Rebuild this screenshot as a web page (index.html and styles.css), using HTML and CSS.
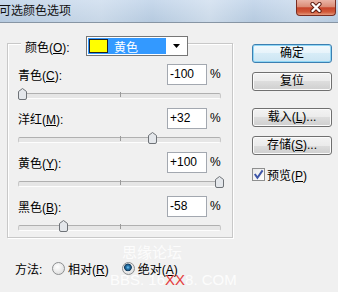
FILE: index.html
```html
<!DOCTYPE html>
<html lang="zh">
<head>
  <meta charset="UTF-8" />
  <title>可选颜色选项</title>
  <link rel="stylesheet" href="styles.css">
</head>
<body>

  <div class="titlebar">
    <span class="title">可选颜色选项</span>
    <div class="close">
      <svg width="14" height="11" viewBox="0 0 14 11">
        <path d="M3.5 2 L10.5 9 M10.5 2 L3.5 9" stroke="#5c1c12" stroke-width="4.2" stroke-linecap="round"/>
        <path d="M3.5 2 L10.5 9 M10.5 2 L3.5 9" stroke="#fff" stroke-width="2.4" stroke-linecap="round"/>
      </svg>
    </div>
  </div>

  <div class="dialog">
    <div class="left">
      <div class="group">
        <div class="legend">
          <span class="lbl">颜色(<u>O</u>):</span>
          <div class="select">
            <div class="val"><i class="swatch"></i><span>黄色</span></div>
            <div class="arrow"><svg width="7" height="4" viewBox="0 0 7 4"><path d="M0 0 H7 L3.5 4 Z" fill="#000"/></svg></div>
          </div>
        </div>

        <div class="channels">
          <div class="channel">
            <div class="head"><span class="lbl">青色(<u>C</u>):</span><span class="num">-100</span><span class="pct">%</span></div>
            <div class="slider">
              <svg class="thumb" style="left: 0px" width="9" height="12" viewBox="0 0 9 12"><path d="M0.5 3.5 L4.5 0.5 L8.5 3.5 V10 Q8.5 11.5 7 11.5 H2 Q0.5 11.5 0.5 10 Z" fill="#e4e7eb" stroke="#6e7277"/></svg>
            </div>
          </div>
          <div class="channel">
            <div class="head"><span class="lbl">洋红(<u>M</u>):</span><span class="num">+32</span><span class="pct">%</span></div>
            <div class="slider">
              <svg class="thumb" style="left: 130px" width="9" height="12" viewBox="0 0 9 12"><path d="M0.5 3.5 L4.5 0.5 L8.5 3.5 V10 Q8.5 11.5 7 11.5 H2 Q0.5 11.5 0.5 10 Z" fill="#e4e7eb" stroke="#6e7277"/></svg>
            </div>
          </div>
          <div class="channel">
            <div class="head"><span class="lbl">黄色(<u>Y</u>):</span><span class="num">+100</span><span class="pct">%</span></div>
            <div class="slider">
              <svg class="thumb" style="left: 197px" width="9" height="12" viewBox="0 0 9 12"><path d="M0.5 3.5 L4.5 0.5 L8.5 3.5 V10 Q8.5 11.5 7 11.5 H2 Q0.5 11.5 0.5 10 Z" fill="#e4e7eb" stroke="#6e7277"/></svg>
            </div>
          </div>
          <div class="channel">
            <div class="head"><span class="lbl">黑色(<u>B</u>):</span><span class="num">-58</span><span class="pct">%</span></div>
            <div class="slider">
              <svg class="thumb" style="left: 41px" width="9" height="12" viewBox="0 0 9 12"><path d="M0.5 3.5 L4.5 0.5 L8.5 3.5 V10 Q8.5 11.5 7 11.5 H2 Q0.5 11.5 0.5 10 Z" fill="#e4e7eb" stroke="#6e7277"/></svg>
            </div>
          </div>
        </div>
      </div>

      <div class="method">
        <span class="lbl">方法:</span>
        <span class="radio"></span><span class="opt">相对(<u>R</u>)</span>
        <span class="radio on"></span><span class="opt">绝对(<u>A</u>)</span>
      </div>
    </div>

    <div class="right">
      <div class="btn default">确定</div>
      <div class="btn">复位</div>
      <div class="btn gap">载入(<u>L</u>)...</div>
      <div class="btn">存储(<u>S</u>)...</div>
      <div class="check">
        <span class="box"><svg width="11" height="11" viewBox="0 0 11 11"><path d="M1.8 5 L4.4 8.8 L9.6 1.4" stroke="#3d55a8" stroke-width="2" fill="none"/></svg></span>
        <span>预览(<u>P</u>)</span>
      </div>
    </div>
  </div>

  <!-- watermark over the lower part -->
  <div class="watermark">
    <div class="wm-cn">思缘论坛</div>
    <div class="wm-url">BBS. 16<span class="red">XX</span>8. COM</div>
  </div>

</body>
</html>
```

FILE: styles.css
```css
* {
  box-sizing: border-box;
}

body {
  margin: 0;
  width: 338px;
  height: 292px;
  overflow: hidden;
  position: relative;
  background: #f0f0f0;
  font-family: "Liberation Sans", "Noto Sans CJK SC", sans-serif;
  font-size: 12px;
  color: #000;
}

u {
  text-decoration-thickness: 1px;
  text-underline-offset: 1px;
}

.titlebar {
  height: 23px;
  display: flex;
  justify-content: space-between;
  align-items: flex-start;
  overflow: hidden;
  border-bottom: 1px solid #8795a4;
  background:
    linear-gradient(90deg, rgba(255,255,255,0) 0%, rgba(255,255,255,0.25) 30%, rgba(255,255,255,0) 45%, rgba(255,255,255,0.3) 62%, rgba(255,255,255,0) 75%, rgba(255,255,255,0.2) 88%, rgba(255,255,255,0) 100%),
    linear-gradient(#c8d9ec, #b6cadf);
}

.title {
  margin-left: -1px;
  line-height: 23px;
  color: #101010;
}

.close {
  width: 40px;
  height: 16px;
  margin-right: 2px;
  border: 1px solid #7a2d21;
  border-top: none;
  border-radius: 0 0 4px 4px;
  background: linear-gradient(#eab4a6, #db8c76 45%, #c7442a 52%, #d15a3a 80%, #e59a7e);
  display: flex;
  align-items: center;
  justify-content: center;
}

.dialog {
  display: flex;
}

.left {
  width: 232px;
  padding-left: 7px;
}

.group {
  margin-top: 20px;
  width: 226px;
  border: 1px solid #c8c8c8;
  box-shadow: 1px 1px 0 #fff, inset 1px 1px 0 #fff;
  padding: 0 10px;
}

.legend {
  display: flex;
  align-items: center;
  width: fit-content;
  height: 20px;
  margin: -8px 0 0 3px;
  padding-left: 4px;
  background: #f0f0f0;
}

.legend .lbl {
  width: 61px;
}

.select {
  width: 102px;
  height: 20px;
  border: 1px solid #767676;
  background: #fff;
  padding: 1px;
  display: flex;
}

.select .val {
  flex: 1;
  display: flex;
  align-items: center;
  background: #3399ff;
  color: #fff;
}

.swatch {
  width: 19px;
  height: 14px;
  margin-left: 1px;
  background: #ffff00;
  border: 1px solid #222;
}

.select .val span {
  margin-left: 6px;
}

.arrow {
  width: 20px;
  display: flex;
  align-items: center;
  justify-content: center;
}

.channels {
  padding-top: 7px;
}

.head {
  display: flex;
  align-items: center;
  height: 22px;
}

.head .lbl {
  flex: 1;
}

.num {
  width: 40px;
  height: 21px;
  border: 1px solid #a3a8b0;
  background: #fff;
  padding-left: 2px;
  line-height: 19px;
}

.pct {
  width: 12px;
  margin-left: 3px;
}

.slider {
  position: relative;
  height: 22px;
}

.slider::before {
  content: "";
  position: absolute;
  left: 0;
  right: 1px;
  top: 8px;
  height: 4px;
  border: 1px solid;
  border-color: #b0b0b0 #c8c8c8 #fdfdfd;
  border-radius: 2px;
  background: #e6e6e6;
}

.slider::after {
  content: "";
  position: absolute;
  left: 102px;
  top: 7px;
  width: 1px;
  height: 5px;
  background: #9a9a9a;
}

.channel:last-child .slider {
  height: 20px;
}

.thumb {
  position: absolute;
  top: 3px;
  z-index: 1;
}

.method {
  display: flex;
  align-items: center;
  height: 20px;
  margin-top: 20px;
  padding-left: 8px;
}

.method .lbl {
  width: 37px;
}

.radio {
  width: 13px;
  height: 13px;
  border-radius: 50%;
  border: 1px solid #8c8e90;
  background: radial-gradient(circle at 40% 35%, #ffffff, #d6d6d6);
}

.radio.on {
  margin-left: 13px;
  background:
    radial-gradient(circle at 45% 40%, #7cc4ee 0, #2a7fb8 1.5px, #123a5c 3.5px, rgba(18,58,92,0) 4.2px),
    radial-gradient(circle at 40% 35%, #ffffff, #d6d6d6);
}

.opt {
  margin-left: 3px;
}

.right {
  width: 80px;
  margin-left: 20px;
  padding-top: 21px;
  display: flex;
  flex-direction: column;
}

.btn {
  height: 19px;
  margin-top: 9px;
  border: 1px solid #707070;
  border-radius: 3px;
  background: linear-gradient(#f3f3f3, #ebebeb 50%, #dddddd 50%, #cfcfcf);
  box-shadow: inset 0 0 0 1px #fbfbfb;
  text-align: center;
  line-height: 17px;
}

.btn.default {
  margin-top: 0;
  border-color: #3c7fb1;
  background: linear-gradient(#f2f9fd, #e6f3fa 50%, #d7ecf7 50%, #cce5f3);
  box-shadow: inset 0 0 0 1px #8fd6f5;
}

.btn.gap {
  margin-top: 17px;
}

.check {
  display: flex;
  align-items: center;
  height: 16px;
  margin-top: 11px;
}

.check .box {
  width: 13px;
  height: 13px;
  margin-right: 2px;
  border: 1px solid #8e8f8f;
  background: linear-gradient(135deg, #e8e8e8, #ffffff);
  display: flex;
  align-items: center;
  justify-content: center;
}

.watermark {
  position: absolute;
  left: 110px;
  top: 244px;
  color: rgba(255, 255, 255, 0.85);
  font-size: 15px;
  line-height: 18px;
  pointer-events: none;
}

.wm-cn {
  margin-left: 12px;
}

.wm-url {
  margin-top: 10px;
  line-height: 16px;
}

.wm-url .red {
  color: #e53d3d;
}
```
